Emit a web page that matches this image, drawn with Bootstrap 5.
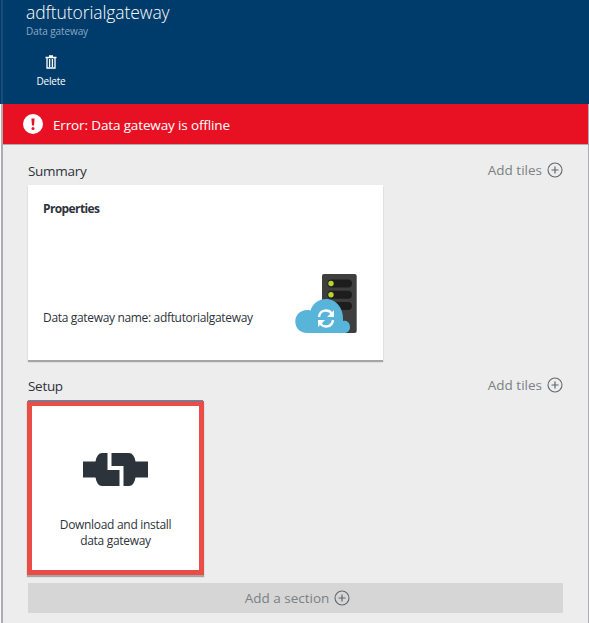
<!DOCTYPE html>
<html lang="en">
<head>
<meta charset="utf-8">
<meta name="viewport" content="width=device-width, initial-scale=1">
<title>adftutorialgateway</title>
<link href="https://cdn.jsdelivr.net/npm/bootstrap@5.3.0/dist/css/bootstrap.min.css" rel="stylesheet">
<style>
body{font-family:"Open Sans","Noto Sans",sans-serif;color:#2e333b;background:#ededed;height:623px;font-size:13.500px}
.blade-head{height:104px;background:#003c6b;border-left:1px solid #003c6b;box-shadow:inset 2px 0 #1b4f79;padding:2px 0 0 25px}
.blade-title{font-size:17.500px;line-height:20px;font-weight:300;letter-spacing:-.08px}
.blade-sub{font-size:10px;line-height:14px;color:#8ba9c4;margin-top:2px;letter-spacing:-.08px}
.cmd{width:50px;margin-top:17px;font-size:10px;line-height:14px;letter-spacing:-.2px}
.cmd span{margin-top:5px}
.blade-body{height:519px;margin-left:1px;border-left:2px solid #adadb1;border-right:1px solid #adadb1;box-shadow:-1px 0 #fafafa}
.error-bar{height:41px;background:#e81123;border-bottom:1px solid #adadb1;padding-left:20px;gap:10px;letter-spacing:-.14px}
.error-text{padding-top:2px}
.blade-content{padding:0 25px}
.section-row{height:40px;padding-top:12px}
.section-row.setup{height:41px}
.section-name{padding-top:4px;letter-spacing:-.3px}
.muted-link{color:#7b8084;gap:5px}
.muted-link svg{color:#63676b}
.tiles-link{padding-top:3px}
.tiles-link svg{margin-top:-1px}
.tile{background:#fff;box-shadow:0 2px 1px rgba(0,0,0,.3)}
.properties{width:355px;height:175px;padding:15px 25px 26px 15px;font-size:12px;letter-spacing:-.33px}
.properties strong{letter-spacing:-.6px}
.property-text{padding-top:28px}
.install{width:177px;height:174px;margin-left:-1px;border:5px solid #ea4c46;font-size:12px;letter-spacing:-.3px;line-height:16px;padding-top:47px;box-shadow:0 -2px 0 -1px #1ba1d8,0 2px 1px rgba(0,0,0,.3)}
.install-text{padding-bottom:21px}
.add-section{height:30px;background:#d6d6d6;margin-top:8px;padding-left:4px}
.add-section span{padding-top:1px}
</style>
</head>
<body class="overflow-hidden">
<svg class="d-none"><symbol id="plus" viewBox="0 0 16 16"><circle cx="8" cy="8" r="7" fill="none" stroke="currentColor" stroke-width="1.1"/><path d="M8 4.500v7M4.500 8h7" stroke="currentColor" stroke-width="1.2"/></symbol></svg>
<header class="blade-head text-white">
  <h1 class="blade-title m-0">adftutorialgateway</h1>
  <div class="blade-sub">Data gateway</div>
  <div class="cmd d-flex flex-column align-items-center">
    <svg width="12" height="14" viewBox="0 0 12 14" fill="none" stroke="#fff"><path d="M.5 2.500h11M4 1h4M2 3v10h8V3M4.600 4v8M7.400 4v8" stroke-width="1.3"/></svg>
    <span>Delete</span>
  </div>
</header>
<main class="blade-body">
  <div class="error-bar d-flex align-items-center text-white">
    <svg width="20" height="20" viewBox="0 0 20 20"><circle cx="10" cy="10" r="10" fill="#fff"/><path d="M8.400 4.500h3.200L11 11.500H9z" fill="#e81123"/><circle cx="10" cy="14.400" r="1.500" fill="#e81123"/></svg>
    <span class="error-text">Error: Data gateway is offline</span>
  </div>
  <div class="blade-content">
    <div class="section-row d-flex justify-content-between">
      <span class="section-name">Summary</span>
      <span class="muted-link tiles-link d-flex align-items-center align-self-start"><span>Add tiles</span><svg width="16" height="16"><use href="#plus"/></svg></span>
    </div>
    <section class="tile properties d-flex flex-column justify-content-between">
      <strong>Properties</strong>
      <div class="d-flex justify-content-between align-items-center">
        <span class="property-text">Data gateway name: adftutorialgateway</span>
        <svg width="63" height="60" viewBox="0 0 63 60"><rect x="27" y="0" width="34.700" height="59" rx="2" fill="#3e3e3f"/><g fill="#1d1d1e"><rect x="32.500" y="5.500" width="24.500" height="8" rx="4"/><rect x="32.500" y="16.700" width="24.500" height="8" rx="4"/><rect x="32.500" y="27.900" width="24.500" height="8" rx="4"/></g><g fill="#b9d432"><circle cx="36" cy="9.500" r="2.700"/><circle cx="36" cy="20.700" r="2.700"/></g><path d="M12 59C5 59 .3 54 .3 47.500C.3 40 7 34.500 15.500 36.500C18 29 24 25 31 25C41 25 49 34 48 47C52 46 55 49 55 53C55 57 52 59 49 59Z" fill="#59b4d9"/><g fill="none" stroke="#fff" stroke-width="2.400"><path d="M24 43c1-8 10-8 13-3M38 46c-1 8-10 8-13 3"/></g><path d="M39 36v7h-7zM23 53v-7h7z" fill="#fff"/></svg>
      </div>
    </section>
    <div class="section-row setup d-flex justify-content-between">
      <span class="section-name">Setup</span>
      <span class="muted-link tiles-link d-flex align-items-center align-self-start"><span>Add tiles</span><svg width="16" height="16"><use href="#plus"/></svg></span>
    </div>
    <section class="tile install d-flex flex-column align-items-center text-center">
      <svg width="65" height="33" viewBox="0 0 65 33"><path d="M0 8.500h12.500Q14 0 19 0h27q5 0 6.500 8.500H65v16H52.500Q51 33 46 33H19q-5 0-6.500-8.500H0z" fill="#2d333a"/><path d="M26.500 0v15h12v18" fill="none" stroke="#fff" stroke-width="4"/></svg>
      <div class="install-text mt-auto">Download and install<br>data gateway</div>
    </section>
    <div class="add-section muted-link d-flex align-items-center justify-content-center"><span>Add a section</span><svg width="16" height="16"><use href="#plus"/></svg></div>
  </div>
</main>
<script src="https://cdn.jsdelivr.net/npm/bootstrap@5.3.0/dist/js/bootstrap.bundle.min.js"></script>
</body>
</html>
